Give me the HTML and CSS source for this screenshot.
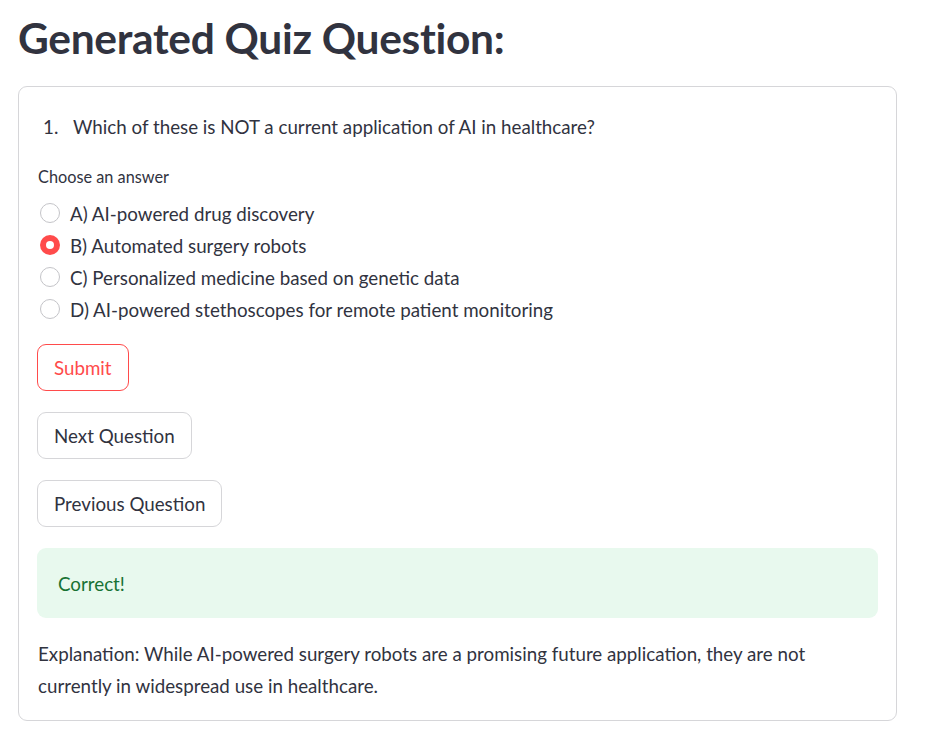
FILE: index.html
```html
<!DOCTYPE html>
<html lang="en">
<head>
<meta charset="utf-8">
<title>Generated Quiz Question</title>
<link rel="stylesheet" href="styles.css">
</head>
<body>
<main class="page">
  <h1 class="title">Generated Quiz Question:</h1>
  <section class="card">
    <div class="question"><span class="qnum">1.</span><span>Which of these is NOT a current application of AI in healthcare?</span></div>
    <div class="label">Choose an answer</div>
    <div class="radios">
      <label class="option"><span class="dot"></span><span>A) AI-powered drug discovery</span></label>
      <label class="option"><span class="dot checked"></span><span>B) Automated surgery robots</span></label>
      <label class="option"><span class="dot"></span><span>C) Personalized medicine based on genetic data</span></label>
      <label class="option"><span class="dot"></span><span>D) AI-powered stethoscopes for remote patient monitoring</span></label>
    </div>
    <div class="buttons">
      <button class="btn btn-primary">Submit</button>
      <button class="btn">Next Question</button>
      <button class="btn">Previous Question</button>
    </div>
    <div class="success">Correct!</div>
    <p class="explanation">Explanation: While AI-powered surgery robots are a promising future application, they are not currently in widespread use in healthcare.</p>
  </section>
</main>
</body>
</html>
```
FILE: styles.css
```css
html, body {
  margin: 0;
  padding: 0;
  background: #ffffff;
}
body {
  font-family: Lato, "Open Sans", sans-serif;
  color: #31333f;
  font-size: 18.75px;
}
.page {
  padding: 10px 0 0 18px;
  width: 879px;
}
.title {
  margin: 0 0 21px 0;
  font-size: 42.5px;
  font-weight: 700;
  line-height: 55px;
  letter-spacing: -0.3px;
  color: #31333f;
}
.card {
  border: 1px solid #d6d6d9;
  border-radius: 9px;
  padding: 24px 18px 18px 18px;
}
.question {
  display: flex;
  align-items: center;
  height: 30px;
  padding-left: 6px;
}
.qnum {
  width: 30px;
}
.label {
  margin-top: 24px;
  height: 22px;
  display: flex;
  align-items: center;
  font-size: 16.3px;
  padding-left: 1px;
}
.radios {
  margin-top: 10px;
  display: flex;
  flex-direction: column;
}
.option {
  display: flex;
  align-items: center;
  height: 32px;
  gap: 10px;
  padding-left: 3px;
}
.dot {
  box-sizing: border-box;
  width: 20px;
  height: 20px;
  border-radius: 50%;
  border: 1px solid #c4c4c8;
  background: #fff;
  position: relative;
}
.dot.checked {
  border: none;
  background: #ff4b4b;
}
.dot.checked::after {
  content: "";
  position: absolute;
  left: 6px;
  top: 6px;
  width: 8px;
  height: 8px;
  border-radius: 50%;
  background: #fff;
}
.buttons {
  margin-top: 19px;
  display: flex;
  flex-direction: column;
  align-items: flex-start;
  gap: 21px;
}
.btn {
  height: 47px;
  padding: 0 16px;
  font-family: inherit;
  font-size: 18.75px;
  color: #31333f;
  background: #fff;
  border: 1px solid #d6d6d9;
  border-radius: 9px;
}
.btn-primary {
  color: #ff4b4b;
  border-color: #ff4b4b;
}
.success {
  margin-top: 21px;
  height: 70px;
  display: flex;
  align-items: center;
  padding-left: 21px;
  background: #e8f9ee;
  color: #177233;
  border-radius: 9px;
}
.explanation {
  margin: 20px 0 0 0;
  padding-left: 1px;
  line-height: 32px;
}
```
